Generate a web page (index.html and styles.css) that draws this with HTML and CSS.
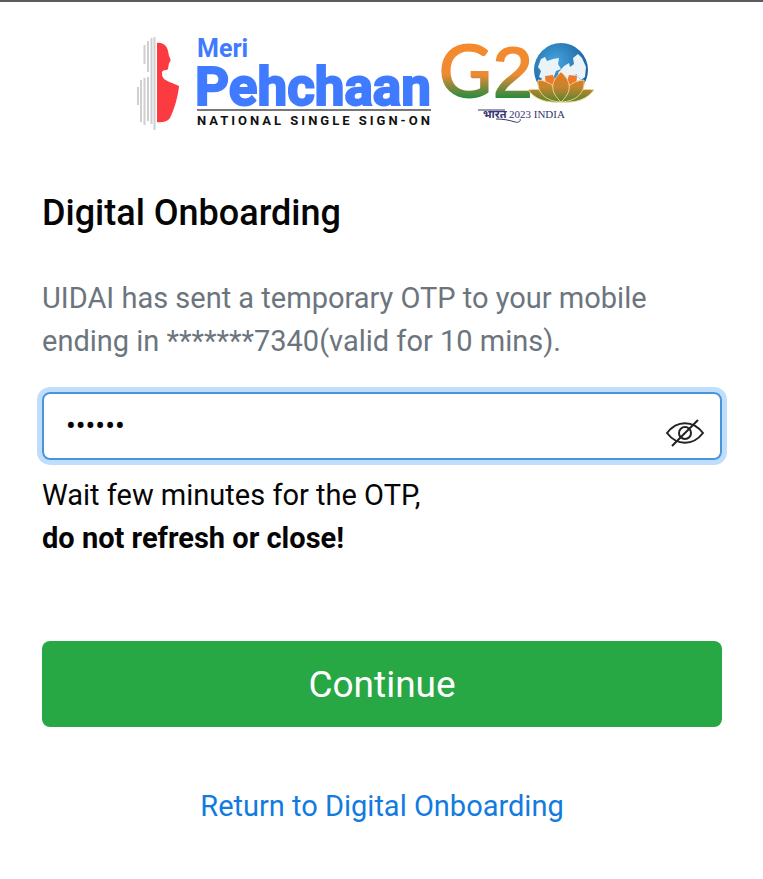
FILE: index.html
```html
<!DOCTYPE html>
<html lang="en">
<head>
<meta charset="utf-8">
<meta name="viewport" content="width=device-width, initial-scale=1">
<title>Digital Onboarding</title>
<link rel="stylesheet" href="styles.css">
</head>
<body>
<header class="logos">
  <svg class="logo-pehchaan" width="298" height="96" viewBox="137 36 298 96" role="img" aria-label="Meri Pehchaan National Single Sign-On">
    <path d="M138 87v18M141 80v42M144.500 45v19M144.500 78v47M148 41v31M148 77v44M151.500 38v86M154.500 37v93" stroke="#cfcfd1" stroke-width="2" fill="none"/>
    <path d="M157 43c6-1 10 3 11 8l1 5c2 4 2 5 0 7l-1 6c-1 2-6 0-6 4 0 6 3 7 10 10l7 3c-1 11-5 24-9 32-3 4-8 5-13 4z" fill="#fb3b40"/>
    <text class="brand-small" x="197" y="57">Meri</text>
    <text class="brand" x="195" y="105">Pehchaan</text>
    <path d="M197 110h234" stroke="#777" stroke-width="2"/>
    <text class="brand-tag" x="197" y="125">NATIONAL SINGLE SIGN-ON</text>
  </svg>
  <svg class="logo-g20" width="158" height="96" viewBox="439 36 158 96" role="img" aria-label="G20 Bharat 2023 India">
    <defs>
      <linearGradient id="tri" gradientUnits="userSpaceOnUse" x1="0" y1="46" x2="0" y2="98">
        <stop offset="0" stop-color="#f58a2c"/><stop offset=".55" stop-color="#ee8a33"/><stop offset=".78" stop-color="#83893b"/><stop offset="1" stop-color="#288c3e"/>
      </linearGradient>
      <linearGradient id="petal" gradientUnits="userSpaceOnUse" x1="0" y1="72" x2="0" y2="102">
        <stop offset="0" stop-color="#ee7526"/><stop offset=".5" stop-color="#c5852d"/><stop offset="1" stop-color="#54842f"/>
      </linearGradient>
      <radialGradient id="sea" cx=".4" cy=".35" r=".7">
        <stop offset="0" stop-color="#45a5df"/><stop offset="1" stop-color="#165a98"/>
      </radialGradient>
    </defs>
    <text class="g" x="439" y="97">G</text>
    <text class="two" x="493" y="97">2</text>
    <circle cx="561" cy="70" r="27" fill="url(#sea)"/>
    <path d="M541 59l4-2 2 4 6-2 6-1-1 6 3 5-5 2-3 8-5-2-3 3-6-3 2-6-3-4zM564 66l5-3 1 4 4-3-1-6 5-4 4 4 4 9-1 10-4 3-5-6-3 7-6 3-5-4-4-7z" fill="#e9f3f8"/>
    <path d="M538 84l7-9 9 2 3 9zM584 84l-7-9-9 2-3 9z" fill="#e9f3f8"/>
    <path d="M545 76l8-1 3 9-10 2zM577 76l-8-1-3 9 10 2z" fill="#ee7a2a"/>
    <g fill="url(#petal)" stroke="#efcf8c" stroke-width="1">
      <path d="M528 90c12-2 24 1 33 12-16 1-26-3-33-12zM594 90c-12-2-24 1-33 12 16 1 26-3 33-12z"/>
      <path d="M538 80c13 1 21 9 23 22-16-1-24-9-23-22zM584 80c-13 1-21 9-23 22 16-1 24-9 23-22z"/>
      <path d="M561 72c11 10 11 20 0 30-11-10-11-20 0-30z"/>
    </g>
    <text class="bharat" x="483" y="118">भारत</text>
    <path d="M478 110h27M496 119c7 0 13 1 19 3 4 1 6-1 5-3" fill="none" stroke="#34346f" stroke-width="1"/>
    <text class="india" x="509" y="118">2023 INDIA</text>
  </svg>
</header>
<main class="content">
  <h1 class="title">Digital Onboarding</h1>
  <form class="otp-form">
    <label class="prompt" for="otp">UIDAI has sent a temporary OTP to your mobile ending in *******7340(valid for 10 mins).</label>
    <div class="field">
      <input class="otp" id="otp" type="password" value="734012" autocomplete="one-time-code">
      <button class="toggle" type="button" aria-label="Show OTP">
        <svg width="40" height="30" viewBox="0 0 40 30" fill="none" stroke="#222" stroke-width="2">
          <path d="M2 15C12 2 28 2 38 15C28 28 12 28 2 15z"/><circle cx="20" cy="15" r="6"/><path d="M7 28L33 2M18 17l5-5"/>
        </svg>
      </button>
    </div>
    <p class="hint">Wait few minutes for the OTP,<br><strong>do not refresh or close!</strong></p>
    <button class="continue" type="button">Continue</button>
  </form>
  <a class="return" href="#">Return to Digital Onboarding</a>
</main>
</body>
</html>
```
FILE: styles.css
```css
* { box-sizing: border-box; }
body {
  margin: 0;
  border-top: 2px solid #5b5b5d;
  background: #fff;
  color: #050505;
  font: 29px/43px Roboto, sans-serif;
}
.logos {
  display: flex;
  justify-content: center;
  gap: 4px;
  padding: 34px 30px 0 0;
}
.logos svg { overflow: visible; }
.brand-small, .brand { fill: #407bff; font-weight: 700; }
.brand-small { font-size: 25px; }
.brand { font-size: 53px; stroke: #407bff; stroke-width: 2; }
.brand-tag { font-size: 13px; font-weight: 700; letter-spacing: 3px; fill: #111; }
.g, .two { fill: url(#tri); stroke: url(#tri); stroke-width: 2; }
.g { font-family: Lato, sans-serif; font-size: 72px; }
.two { font-family: "Liberation Sans", sans-serif; font-size: 71px; }
.bharat { font: 700 11px "Noto Sans Devanagari", "Noto Sans", sans-serif; fill: #34346f; }
.india { font: 11px "Liberation Serif", serif; fill: #34346f; }
.content { padding: 57px 41px 44px 42px; }
.title { margin: 0 0 40px; font-size: 36px; line-height: 48px; font-weight: 500; }
.prompt { display: block; color: #6c757d; }
.field {
  display: flex;
  align-items: center;
  height: 68px;
  margin: 29px 0 14px;
  padding: 0 15px 0 22px;
  border: 2px solid #4a94dc;
  border-radius: 8px;
  box-shadow: 0 0 0 5px #bfdefb;
}
.otp { flex: 1; min-width: 0; padding: 0; border: 0; outline: 0; background: none; color: #050505; font: 29px Roboto, sans-serif; }
.toggle { display: flex; padding: 14px 0 0; border: 0; background: none; }
.hint { margin: 0; }
.hint strong { font-weight: 700; }
.continue {
  display: block;
  width: 100%;
  height: 86px;
  margin-top: 81px;
  border: 0;
  border-radius: 8px;
  background: #28a745;
  color: #fff;
  font: 37px Roboto, sans-serif;
}
.return { display: block; margin-top: 58px; color: #127be0; text-align: center; text-decoration: none; }
```
